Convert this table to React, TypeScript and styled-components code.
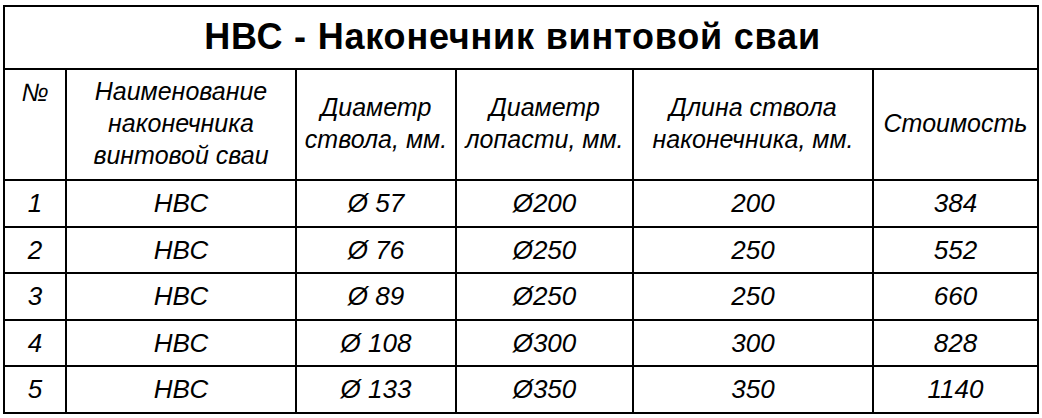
import * as React from 'react'
import styled, { createGlobalStyle } from 'styled-components'

const GlobalStyle = createGlobalStyle`
    html, body {
        margin: 0;
        padding: 0;
        background: #ffffff;
    }
    body {
        font-family: "Liberation Sans", Arial, sans-serif;
        color: #000000;
    }
`

const Page = styled.div`
    padding: 5px 0 0 3px;
    width: 1042px;
    height: 418px;
    box-sizing: border-box;
`

const PriceTable = styled.table`
    width: 1036px;
    border-collapse: collapse;
    table-layout: fixed;
    border: 2px solid #000;
`

const Row = styled.tr<{ $h: number }>`
    height: ${(p) => p.$h}px;
`

const Title = styled.th`
    padding: 0 17px 2px 0;
    border: 2px solid #000;
    font-size: 36px;
    letter-spacing: 0.8px;
    font-weight: bold;
    text-align: center;
    vertical-align: middle;
`

const Header = styled.th<{ $top?: boolean }>`
    padding: ${(p) => (p.$top ? '6px 0 0' : '0 0 4px')};
    border: 2px solid #000;
    font-size: 25px;
    line-height: 32px;
    font-weight: normal;
    font-style: italic;
    text-align: center;
    vertical-align: ${(p) => (p.$top ? 'top' : 'middle')};
`

const Cell = styled.td`
    padding: 0;
    border: 2px solid #000;
    font-size: 26px;
    font-style: italic;
    text-align: center;
    vertical-align: middle;
`

const columns = [62, 230, 160, 177, 240, 165]

const rows = [
    { n: '1', shaft: 'Ø 57', blade: 'Ø200', length: '200', price: '384', h: 47 },
    { n: '2', shaft: 'Ø 76', blade: 'Ø250', length: '250', price: '552', h: 46 },
    { n: '3', shaft: 'Ø 89', blade: 'Ø250', length: '250', price: '660', h: 47 },
    { n: '4', shaft: 'Ø 108', blade: 'Ø300', length: '300', price: '828', h: 46 },
    { n: '5', shaft: 'Ø 133', blade: 'Ø350', length: '350', price: '1140', h: 47 },
]

export default function App() {
    return (
        <Page>
            <GlobalStyle />
            <PriceTable>
                <colgroup>
                    {columns.map((w, i) => (
                        <col key={i} style={{ width: w }} />
                    ))}
                </colgroup>
                <thead>
                    <Row $h={63}>
                        <Title colSpan={6}>НВС - Наконечник винтовой сваи</Title>
                    </Row>
                    <Row $h={111}>
                        <Header $top>№</Header>
                        <Header>Наименование<br />наконечника<br />винтовой сваи</Header>
                        <Header>Диаметр<br />ствола, мм.</Header>
                        <Header>Диаметр<br />лопасти, мм.</Header>
                        <Header>Длина ствола<br />наконечника, мм.</Header>
                        <Header>Стоимость</Header>
                    </Row>
                </thead>
                <tbody>
                    {rows.map((r) => (
                        <Row key={r.n} $h={r.h}>
                            <Cell>{r.n}</Cell>
                            <Cell>НВС</Cell>
                            <Cell>{r.shaft}</Cell>
                            <Cell>{r.blade}</Cell>
                            <Cell>{r.length}</Cell>
                            <Cell>{r.price}</Cell>
                        </Row>
                    ))}
                </tbody>
            </PriceTable>
        </Page>
    )
}
